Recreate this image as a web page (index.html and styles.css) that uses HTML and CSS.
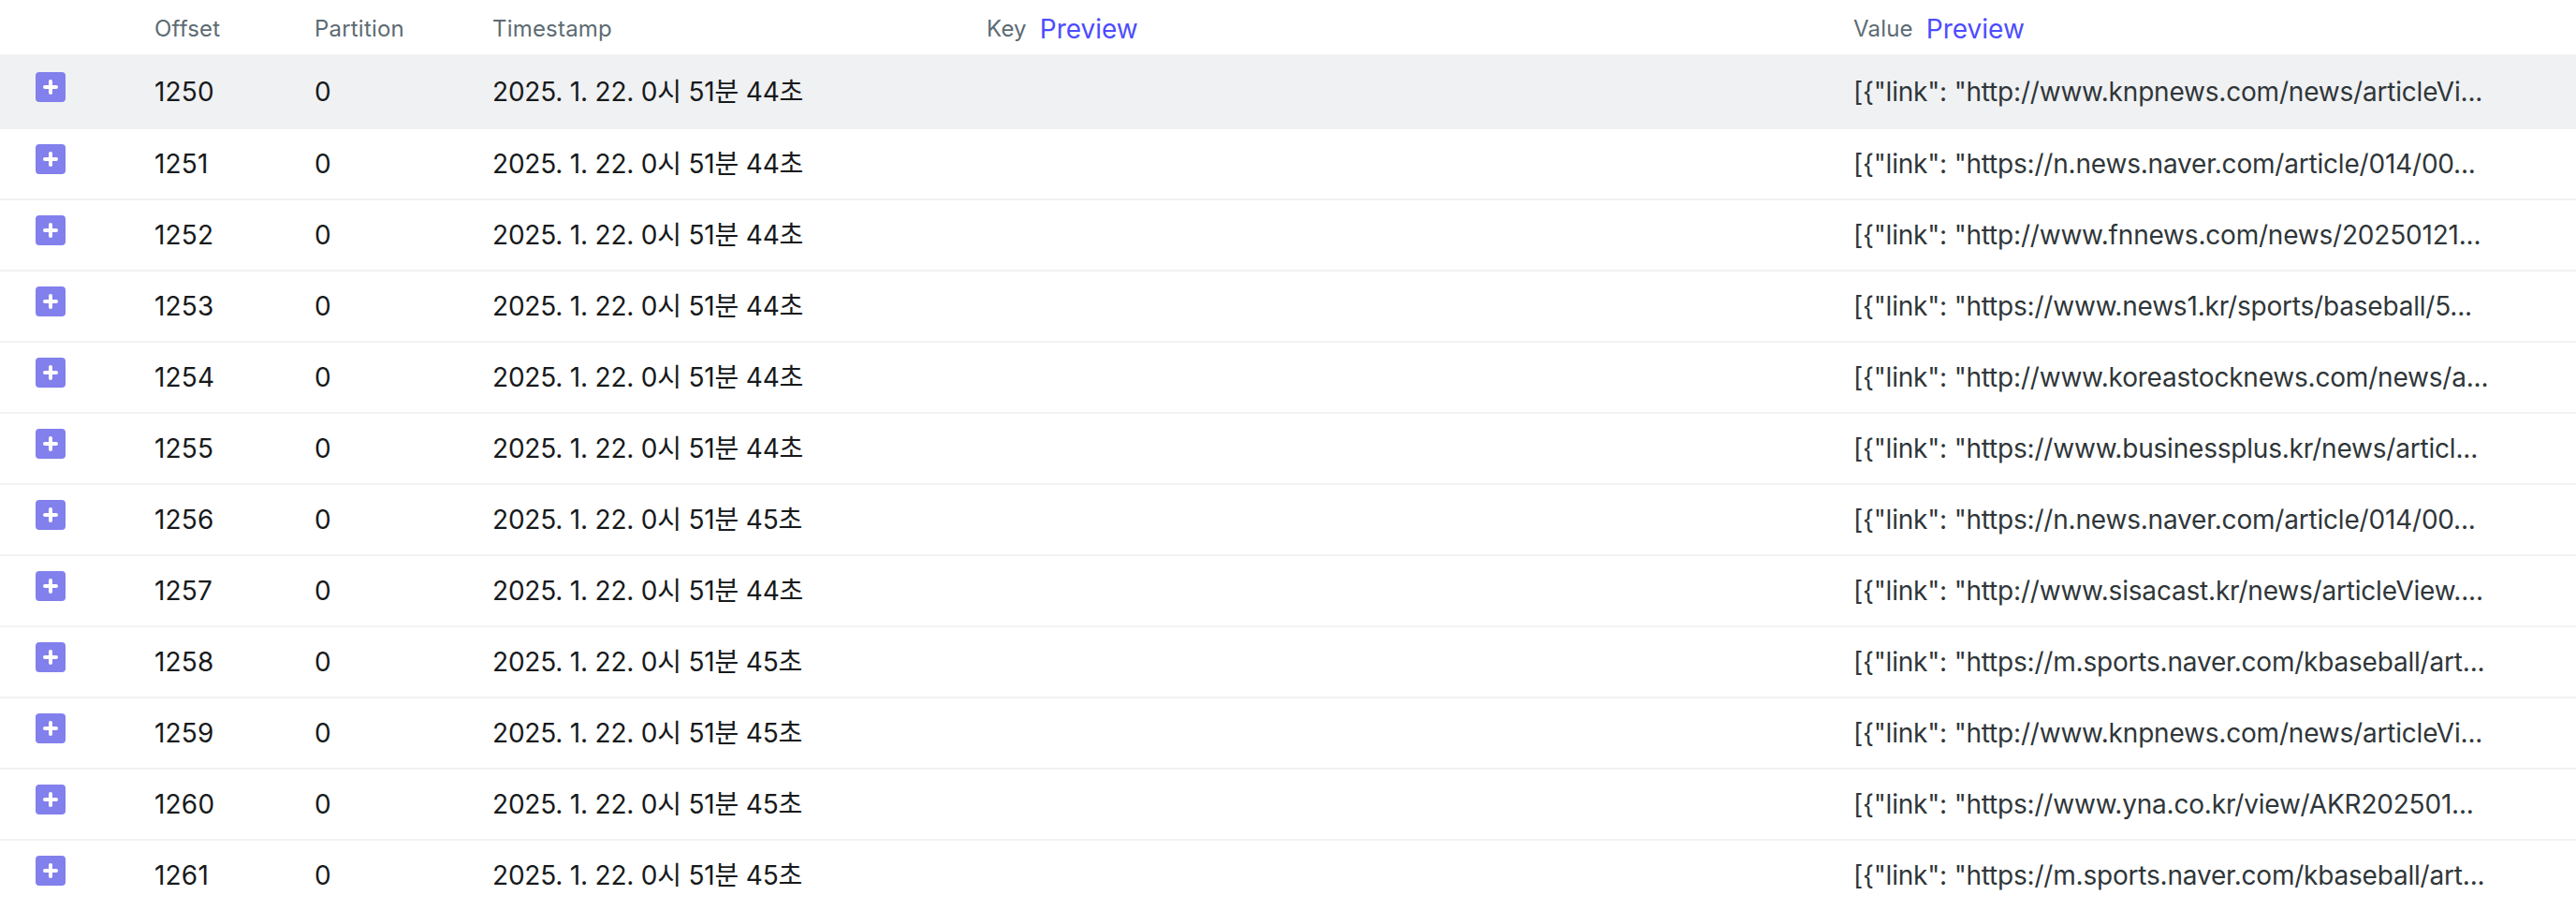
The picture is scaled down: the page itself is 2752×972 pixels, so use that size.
FILE: index.html
```html
<!DOCTYPE html>
<html lang="ko">
<head>
<meta charset="utf-8">
<title>Messages</title>
<link rel="stylesheet" href="styles.css">
</head>
<body>
<main class="table">
  <div class="row head">
    <div></div>
    <div>Offset</div>
    <div>Partition</div>
    <div>Timestamp</div>
    <div class="with-link">Key <a class="preview">Preview</a></div>
    <div class="with-link">Value <a class="preview">Preview</a></div>
  </div>
  <div class="row hover">
    <div><svg class="plus" viewBox="0 0 16 16"><rect width="16" height="16" rx="2"/><path d="M5 8h6M8 5v6"/></svg></div>
    <div>1250</div><div>0</div><div class="ts">2025. 1. 22. 0시 51분 44초</div><div></div>
    <div class="value">[{"link": "http://www.knpnews.com/news/articleVi...</div>
  </div>
  <div class="row">
    <div><svg class="plus" viewBox="0 0 16 16"><rect width="16" height="16" rx="2"/><path d="M5 8h6M8 5v6"/></svg></div>
    <div>1251</div><div>0</div><div class="ts">2025. 1. 22. 0시 51분 44초</div><div></div>
    <div class="value">[{"link": "https://n.news.naver.com/article/014/00...</div>
  </div>
  <div class="row">
    <div><svg class="plus" viewBox="0 0 16 16"><rect width="16" height="16" rx="2"/><path d="M5 8h6M8 5v6"/></svg></div>
    <div>1252</div><div>0</div><div class="ts">2025. 1. 22. 0시 51분 44초</div><div></div>
    <div class="value">[{"link": "http://www.fnnews.com/news/20250121...</div>
  </div>
  <div class="row">
    <div><svg class="plus" viewBox="0 0 16 16"><rect width="16" height="16" rx="2"/><path d="M5 8h6M8 5v6"/></svg></div>
    <div>1253</div><div>0</div><div class="ts">2025. 1. 22. 0시 51분 44초</div><div></div>
    <div class="value">[{"link": "https://www.news1.kr/sports/baseball/5...</div>
  </div>
  <div class="row">
    <div><svg class="plus" viewBox="0 0 16 16"><rect width="16" height="16" rx="2"/><path d="M5 8h6M8 5v6"/></svg></div>
    <div>1254</div><div>0</div><div class="ts">2025. 1. 22. 0시 51분 44초</div><div></div>
    <div class="value">[{"link": "http://www.koreastocknews.com/news/a...</div>
  </div>
  <div class="row">
    <div><svg class="plus" viewBox="0 0 16 16"><rect width="16" height="16" rx="2"/><path d="M5 8h6M8 5v6"/></svg></div>
    <div>1255</div><div>0</div><div class="ts">2025. 1. 22. 0시 51분 44초</div><div></div>
    <div class="value">[{"link": "https://www.businessplus.kr/news/articl...</div>
  </div>
  <div class="row">
    <div><svg class="plus" viewBox="0 0 16 16"><rect width="16" height="16" rx="2"/><path d="M5 8h6M8 5v6"/></svg></div>
    <div>1256</div><div>0</div><div class="ts">2025. 1. 22. 0시 51분 45초</div><div></div>
    <div class="value">[{"link": "https://n.news.naver.com/article/014/00...</div>
  </div>
  <div class="row">
    <div><svg class="plus" viewBox="0 0 16 16"><rect width="16" height="16" rx="2"/><path d="M5 8h6M8 5v6"/></svg></div>
    <div>1257</div><div>0</div><div class="ts">2025. 1. 22. 0시 51분 44초</div><div></div>
    <div class="value">[{"link": "http://www.sisacast.kr/news/articleView....</div>
  </div>
  <div class="row">
    <div><svg class="plus" viewBox="0 0 16 16"><rect width="16" height="16" rx="2"/><path d="M5 8h6M8 5v6"/></svg></div>
    <div>1258</div><div>0</div><div class="ts">2025. 1. 22. 0시 51분 45초</div><div></div>
    <div class="value">[{"link": "https://m.sports.naver.com/kbaseball/art...</div>
  </div>
  <div class="row">
    <div><svg class="plus" viewBox="0 0 16 16"><rect width="16" height="16" rx="2"/><path d="M5 8h6M8 5v6"/></svg></div>
    <div>1259</div><div>0</div><div class="ts">2025. 1. 22. 0시 51분 45초</div><div></div>
    <div class="value">[{"link": "http://www.knpnews.com/news/articleVi...</div>
  </div>
  <div class="row">
    <div><svg class="plus" viewBox="0 0 16 16"><rect width="16" height="16" rx="2"/><path d="M5 8h6M8 5v6"/></svg></div>
    <div>1260</div><div>0</div><div class="ts">2025. 1. 22. 0시 51분 45초</div><div></div>
    <div class="value">[{"link": "https://www.yna.co.kr/view/AKR202501...</div>
  </div>
  <div class="row">
    <div><svg class="plus" viewBox="0 0 16 16"><rect width="16" height="16" rx="2"/><path d="M5 8h6M8 5v6"/></svg></div>
    <div>1261</div><div>0</div><div class="ts">2025. 1. 22. 0시 51분 45초</div><div></div>
    <div class="value">[{"link": "https://m.sports.naver.com/kbaseball/art...</div>
  </div>
</main>
</body>
</html>
```
FILE: styles.css
```css
html, body {
  margin: 0;
  height: 100%;
  overflow: hidden;
  background: #fff;
}
.table {
  font-family: Inter, "Noto Sans CJK KR", sans-serif;
  font-size: 28px;
  line-height: 40px;
  letter-spacing: 0.2px;
  color: #171a1c;
}
.row {
  display: grid;
  grid-template-columns: 165px 171px 190px 528px 926px 1fr;
  align-items: center;
  height: 76px;
  box-sizing: border-box;
  border-bottom: 2px solid #f1f2f3;
}
.row > div:first-child {
  padding-left: 38px;
  align-self: start;
  padding-top: 16px;
}
.head {
  height: 61px;
  padding-top: 4px;
  font-size: 24px;
  line-height: 32px;
  color: #5d6b73;
  border-bottom: 3px solid #f0f1f3;
}
.head > div:first-child { padding-top: 0; }
.with-link {
  display: flex;
  align-items: center;
  gap: 14px;
}
.preview {
  font-size: 28px;
  letter-spacing: 0;
  color: #4c4cff;
}
.hover {
  height: 77px;
  padding-bottom: 1px;
  background: #f0f1f3;
  border-bottom-color: #f0f1f3;
}
.ts {
  letter-spacing: -0.2px;
}
.value {
  letter-spacing: -0.2px;
  color: #2f3639;
}
.plus {
  display: block;
  width: 32px;
  height: 32px;
}
.plus rect {
  fill: #8280ec;
}
.plus path {
  fill: none;
  stroke: #fff;
  stroke-width: 2;
  stroke-linecap: round;
}
```
